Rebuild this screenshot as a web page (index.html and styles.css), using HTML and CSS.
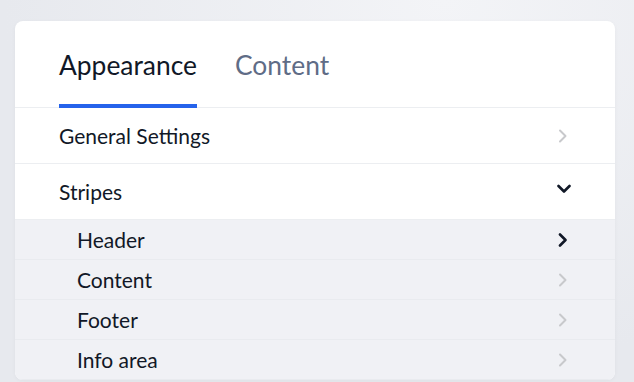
FILE: index.html
```html
<!DOCTYPE html>
<html lang="en">
<head>
    <meta charset="UTF-8">
    <meta name="viewport" content="width=device-width, initial-scale=1.0">
    <title>Settings</title>
    <link rel="stylesheet" href="styles.css">
</head>
<body>
<div class="panel">
    <div class="tabs">
        <div class="tab active">Appearance</div>
        <div class="tab">Content</div>
    </div>

    <div class="row">
        <span>General Settings</span>
        <svg class="chev light" width="10" height="14" viewBox="0 0 10 14"><path d="M2 1.5 L7.5 7 L2 12.5" /></svg>
    </div>
    <div class="row">
        <span>Stripes</span>
        <svg class="chev down" width="14" height="10" viewBox="0 0 14 10"><path d="M1.5 2 L7 7.5 L12.5 2" /></svg>
    </div>

    <div class="sublist">
        <div class="subrow">
            <span>Header</span>
            <svg class="chev" width="10" height="14" viewBox="0 0 10 14"><path d="M2 1.5 L7.5 7 L2 12.5" /></svg>
        </div>
        <div class="subrow">
            <span>Content</span>
            <svg class="chev light" width="10" height="14" viewBox="0 0 10 14"><path d="M2 1.5 L7.5 7 L2 12.5" /></svg>
        </div>
        <div class="subrow">
            <span>Footer</span>
            <svg class="chev light" width="10" height="14" viewBox="0 0 10 14"><path d="M2 1.5 L7.5 7 L2 12.5" /></svg>
        </div>
        <div class="subrow">
            <span>Info area</span>
            <svg class="chev light" width="10" height="14" viewBox="0 0 10 14"><path d="M2 1.5 L7.5 7 L2 12.5" /></svg>
        </div>
    </div>
</div>
</body>
</html>
```

FILE: styles.css
```css
body {
    margin: 0;
    padding: 21px 0 0 15px;
    height: 100vh;
    box-sizing: border-box;
    overflow: hidden;
    font-family: 'Lato', sans-serif;
    color: #111827;
    background: radial-gradient(ellipse at 70% 0%, #f3f4f7 0%, #e7e9ee 70%);
}

.panel {
    width: 600px;
    background-color: #ffffff;
    border-radius: 8px;
    box-shadow: 0 1px 4px rgba(0, 0, 0, 0.04);
    overflow: hidden;
}

.tabs {
    display: flex;
    gap: 38px;
    padding: 29px 0 0 44px;
    border-bottom: 1px solid #eceef1;
}

.tab {
    font-size: 26.4px;
    line-height: 31px;
    padding-bottom: 23px;
    border-bottom: 4px solid transparent;
    margin-bottom: -1px;
    color: #5f6c86;
}

.tab.active {
    color: #111827;
    border-bottom-color: #2563eb;
}

.row {
    display: flex;
    justify-content: space-between;
    align-items: center;
    height: 55px;
    padding: 0 47px 0 44px;
    font-size: 21px;
    border-bottom: 1px solid #eceef1;
}

.sublist {
    background-color: #f0f1f5;
}

.subrow {
    display: flex;
    justify-content: space-between;
    align-items: center;
    height: 39px;
    padding: 0 47px 0 62px;
    font-size: 21px;
    border-bottom: 1px solid #e9ebef;
}

.chev path {
    fill: none;
    stroke: #111827;
    stroke-width: 2.6;
    stroke-linecap: round;
    stroke-linejoin: round;
}

.chev.light path {
    stroke: #c8c9cc;
    stroke-width: 2;
}

.chev.down {
    margin-right: -3px;
    margin-top: -6px;
}
```
